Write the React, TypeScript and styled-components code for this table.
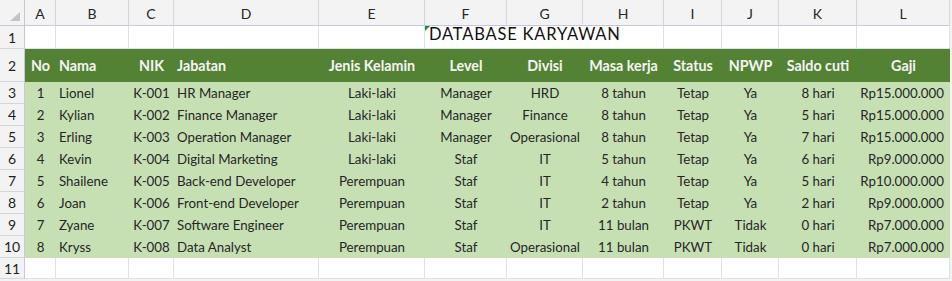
import * as React from 'react';
import styled, { createGlobalStyle, css } from 'styled-components';

const GlobalStyle = createGlobalStyle`
  html, body {
    margin: 0;
    padding: 0;
    background: #f3f3f3;
  }

  body {
    font-family: Lato, "Open Sans", sans-serif;
    color: #222;
  }
`;

type Align = 'left' | 'center' | 'right';
type Tone = 'plain' | 'head' | 'data';

const COLUMNS = ['A', 'B', 'C', 'D', 'E', 'F', 'G', 'H', 'I', 'J', 'K', 'L'];
const WIDTHS = [31, 73, 45, 145, 106, 82, 76, 81, 58, 57, 78, 93];

const HEADINGS = [
  'No', 'Nama', 'NIK', 'Jabatan', 'Jenis Kelamin', 'Level', 'Divisi',
  'Masa kerja', 'Status', 'NPWP', 'Saldo cuti', 'Gaji',
];
const HEAD_ALIGN: Align[] = [
  'center', 'left', 'center', 'left', 'center', 'center', 'center',
  'center', 'center', 'center', 'center', 'center',
];
const DATA_ALIGN: Align[] = [
  'center', 'left', 'center', 'left', 'center', 'center', 'center',
  'center', 'center', 'center', 'center', 'right',
];

const employees = [
  ['1', 'Lionel', 'K-001', 'HR Manager', 'Laki-laki', 'Manager', 'HRD', '8 tahun', 'Tetap', 'Ya', '8 hari', 'Rp15.000.000'],
  ['2', 'Kylian', 'K-002', 'Finance Manager', 'Laki-laki', 'Manager', 'Finance', '8 tahun', 'Tetap', 'Ya', '5 hari', 'Rp15.000.000'],
  ['3', 'Erling', 'K-003', 'Operation Manager', 'Laki-laki', 'Manager', 'Operasional', '8 tahun', 'Tetap', 'Ya', '7 hari', 'Rp15.000.000'],
  ['4', 'Kevin', 'K-004', 'Digital Marketing', 'Laki-laki', 'Staf', 'IT', '5 tahun', 'Tetap', 'Ya', '6 hari', 'Rp9.000.000'],
  ['5', 'Shailene', 'K-005', 'Back-end Developer', 'Perempuan', 'Staf', 'IT', '4 tahun', 'Tetap', 'Ya', '5 hari', 'Rp10.000.000'],
  ['6', 'Joan', 'K-006', 'Front-end Developer', 'Perempuan', 'Staf', 'IT', '2 tahun', 'Tetap', 'Ya', '2 hari', 'Rp9.000.000'],
  ['7', 'Zyane', 'K-007', 'Software Engineer', 'Perempuan', 'Staf', 'IT', '11 bulan', 'PKWT', 'Tidak', '0 hari', 'Rp7.000.000'],
  ['8', 'Kryss', 'K-008', 'Data Analyst', 'Perempuan', 'Staf', 'Operasional', '11 bulan', 'PKWT', 'Tidak', '0 hari', 'Rp7.000.000'],
];

const Sheet = styled.div`
  display: grid;
  grid-template-columns: 25px ${WIDTHS.map(w => `${w}px`).join(' ')};
  grid-template-rows: 26px 23px 33px repeat(8, 22px) 21px;
  width: max-content;
  font-size: 13.3px;
`;

const Corner = styled.div`
  position: relative;
  background: #f3f3f3;
  border-right: 1px solid #c3c9d8;
  border-bottom: 1px solid #c3c9d8;

  &::after {
    content: '';
    position: absolute;
    right: 4px;
    bottom: 4px;
    width: 0;
    height: 0;
    border-left: 10px solid transparent;
    border-bottom: 9px solid #c4c4c4;
  }
`;

const ColHeader = styled.div`
  display: flex;
  align-items: flex-end;
  justify-content: center;
  padding-bottom: 3px;
  box-sizing: border-box;
  background: #f3f3f3;
  border-right: 1px solid #d2d6e0;
  border-bottom: 1px solid #c3c9d8;
  font-size: 14px;
  color: #262626;
`;

const RowHeader = styled.div`
  display: flex;
  align-items: center;
  justify-content: center;
  background: #f3f3f3;
  border-right: 1px solid #c3c9d8;
  border-bottom: 1px solid #d2d6e0;
  font-size: 14px;
  color: #1f1f1f;
`;

const Cell = styled.div<{ $align: Align; $tone: Tone; $mark?: boolean }>`
  position: relative;
  display: flex;
  align-items: center;
  justify-content: ${p => (p.$align === 'left' ? 'flex-start' : p.$align === 'right' ? 'flex-end' : 'center')};
  padding: 0 ${p => (p.$align === 'right' ? '6px' : '3px')} 0 3px;
  box-sizing: border-box;
  white-space: nowrap;

  ${p =>
    p.$tone === 'plain' &&
    css`
      background: #fff;
      border-right: 1px solid #dde1e8;
      border-bottom: 1px solid #dde1e8;
    `}

  ${p =>
    p.$tone === 'head' &&
    css`
      background: #548235;
      color: #f4f4f4;
      font-weight: 700;
      font-size: 14.3px;
    `}

  ${p =>
    p.$tone === 'data' &&
    css`
      background: #c6e0b4;
      color: #262626;
    `}

  ${p =>
    p.$mark &&
    css`
      &::before {
        content: '';
        position: absolute;
        left: 0;
        top: 0;
        border-top: 5px solid #2b9a3e;
        border-right: 5px solid transparent;
      }
    `}
`;

const TitleCell = styled.div`
  position: relative;
  grid-column: span 3;
  display: flex;
  align-items: flex-end;
  padding: 0 0 4px 4px;
  box-sizing: border-box;
  background: #fff;
  border-right: 1px solid #dde1e8;
  border-bottom: 1px solid #dde1e8;
  font-size: 16.5px;
  letter-spacing: 0.8px;
  color: #111;
  white-space: nowrap;

  &::before {
    content: '';
    position: absolute;
    left: 0;
    top: 0;
    border-top: 5px solid #1e8a36;
    border-right: 5px solid transparent;
  }
`;

export default function App() {
  return (
    <>
      <GlobalStyle />
      <Sheet>
        <Corner />
        {COLUMNS.map(c => (
          <ColHeader key={c}>{c}</ColHeader>
        ))}

        <RowHeader>1</RowHeader>
        {COLUMNS.slice(0, 5).map(c => (
          <Cell key={c} $align="left" $tone="plain" />
        ))}
        <TitleCell>DATABASE KARYAWAN</TitleCell>
        {COLUMNS.slice(8).map(c => (
          <Cell key={c} $align="left" $tone="plain" />
        ))}

        <RowHeader>2</RowHeader>
        {HEADINGS.map((h, i) => (
          <Cell key={h} $align={HEAD_ALIGN[i]} $tone="head" $mark={i === 11}>
            {h}
          </Cell>
        ))}

        {employees.map((row, r) => (
          <React.Fragment key={row[2]}>
            <RowHeader>{r + 3}</RowHeader>
            {row.map((value, i) => (
              <Cell key={i} $align={DATA_ALIGN[i]} $tone="data">
                {value}
              </Cell>
            ))}
          </React.Fragment>
        ))}

        <RowHeader>11</RowHeader>
        {COLUMNS.map(c => (
          <Cell key={c} $align="left" $tone="plain" />
        ))}
      </Sheet>
    </>
  );
}
